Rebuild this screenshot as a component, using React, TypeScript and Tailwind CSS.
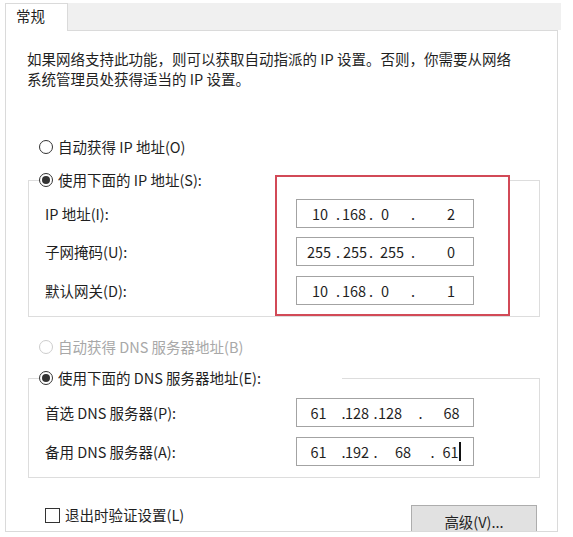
import React from "react";

type Tok = [React.ReactNode, number];

// Each token is centred on its own x position inside the field (relative to the box's left edge).
function IpBox({ toks }: { toks: Tok[] }) {
  let prev = 1;
  return (
    <div className="w-[178px] h-[29px] border border-[#a3a3a3] bg-white flex items-center text-[#1f1f1f]">
      {toks.map(([t, c], i) => {
        const m = c - prev;
        prev = c;
        return (
          <span key={i} className="w-0 shrink-0 flex justify-center whitespace-nowrap" style={{ marginLeft: m }}>
            {t}
          </span>
        );
      })}
    </div>
  );
}

function Radio({ checked = false, disabled = false }: { checked?: boolean; disabled?: boolean }) {
  return (
    <span
      className={
        disabled
          ? "w-[14px] h-[14px] rounded-full border border-[#cdcdcd] bg-white flex items-center justify-center shrink-0"
          : "w-[14px] h-[14px] rounded-full border border-[#333333] bg-white flex items-center justify-center shrink-0"
      }
    >
      {checked && <span className="w-[8px] h-[8px] rounded-full bg-[#333333]" />}
    </span>
  );
}

function FieldRow({ label, toks, className }: { label: string; toks: Tok[]; className: string }) {
  return (
    <div className={className}>
      <span className="w-[251px] shrink-0">{label}</span>
      <IpBox toks={toks} />
    </div>
  );
}

const caret = <span className="block shrink-0 w-[1.5px] h-[19px] bg-[#111111]" />;

export default function App() {
  return (
    <div className="w-[573px] h-[537px] bg-white pt-[3px] pl-[5px] overflow-hidden font-['Noto_Sans_CJK_SC','Noto_Sans',sans-serif] text-[14.5px] leading-[20px] text-[#1f1f1f]">
      {/* tab strip */}
      <div className="w-[556px] h-[27px] bg-[#f0f0f0]">
        <div className="relative z-10 w-[63px] h-[28px] bg-white border-l border-t border-r border-[#dadada] pl-[10px] pt-[2px]">
          常规
        </div>
      </div>

      {/* tab page */}
      <div className="relative w-[553px] h-[502px] border border-[#dadada] bg-white overflow-hidden">
        <p className="ml-[21px] mt-[18px] w-[520px]">
          如果网络支持此功能，则可以获取自动指派的 IP 设置。否则，你需要从网络
          <br />
          系统管理员处获得适当的 IP 设置。
        </p>

        <div className="ml-[33px] mt-[48px] h-[20px] flex items-center gap-[5px]">
          <Radio />
          <span>自动获得 IP 地址(O)</span>
        </div>

        {/* static address group */}
        <div className="ml-[22px] mt-[23px] w-[512px] border border-[#dddddd] pb-[11px]">
          <div className="-mt-[11px] ml-[10px] h-[20px] w-[471px] bg-white flex items-center gap-[5px]">
            <Radio checked />
            <span>使用下面的 IP 地址(S):</span>
          </div>
          <FieldRow
            className="mt-[9px] h-[29px] pl-[16px] flex items-center"
            label="IP 地址(I):"
            toks={[["10", 24], [".", 42], ["168", 58], [".", 75], ["0", 89], [".", 117], ["2", 155]]}
          />
          <FieldRow
            className="mt-[9px] h-[29px] pl-[16px] flex items-center"
            label="子网掩码(U):"
            toks={[["255", 23], [".", 42], ["255", 59], [".", 75], ["255", 96], [".", 117], ["0", 155]]}
          />
          <FieldRow
            className="mt-[10px] h-[29px] pl-[16px] flex items-center"
            label="默认网关(D):"
            toks={[["10", 24], [".", 42], ["168", 58], [".", 75], ["0", 89], [".", 117], ["1", 155]]}
          />
        </div>

        <div className="ml-[33px] mt-[20px] h-[20px] flex items-center gap-[5px] text-[#a8a8a8]">
          <Radio disabled />
          <span>自动获得 DNS 服务器地址(B)</span>
        </div>

        {/* DNS group */}
        <div className="ml-[22px] mt-[21px] w-[512px] border border-[#dddddd] pb-[11px]">
          <div className="-mt-[11px] ml-[10px] h-[20px] w-[303px] bg-white flex items-center gap-[5px]">
            <Radio checked />
            <span>使用下面的 DNS 服务器地址(E):</span>
          </div>
          <FieldRow
            className="mt-[10px] h-[29px] pl-[16px] flex items-center"
            label="首选 DNS 服务器(P):"
            toks={[["61", 22.5], [".", 47.5], ["128", 61], [".", 79.5], ["128", 94], [".", 124.5], ["68", 155.5]]}
          />
          <FieldRow
            className="mt-[10px] h-[29px] pl-[16px] flex items-center"
            label="备用 DNS 服务器(A):"
            toks={[["61", 22.5], [".", 47.5], ["192", 61], [".", 79.5], ["68", 107], [".", 136.5], ["61", 154.5], [caret, 164]]}
          />
        </div>

        <div className="mt-[27px] flex items-start">
          <div className="ml-[39px] mt-[2px] h-[16px] flex items-center gap-[5px]">
            <span className="w-[15px] h-[15px] border border-[#333333] bg-white shrink-0" />
            <span>退出时验证设置(L)</span>
          </div>
          <div className="ml-auto mr-[20px] w-[126px] h-[34px] shrink-0 bg-[#e1e1e1] border border-[#adadad] flex items-center justify-center">
            高级(V)...
          </div>
        </div>

        {/* red highlight drawn over the address fields */}
        <div className="absolute left-[269px] top-[144px] w-[235px] h-[141px] border-2 border-[#d24a57] pointer-events-none" />
      </div>
    </div>
  );
}
